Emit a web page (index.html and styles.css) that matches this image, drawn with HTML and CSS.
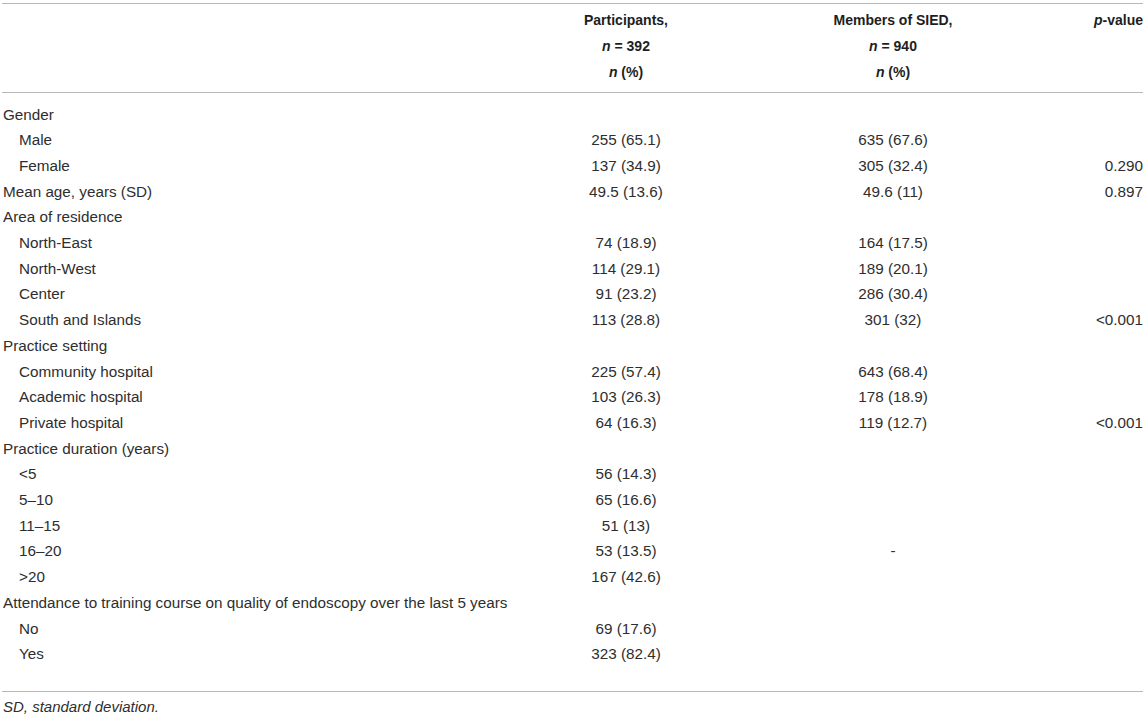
FILE: index.html
```html
<!DOCTYPE html>
<html lang="en">
<head>
<meta charset="utf-8">
<title>Table</title>
<link rel="stylesheet" href="styles.css">
</head>
<body>
<div class="wrap">
<table class="data">
  <colgroup>
    <col class="c1"><col class="c2"><col class="c3"><col class="c4">
  </colgroup>
  <thead>
    <tr class="h1">
      <th></th>
      <th class="ctr">Participants,<br><i>n</i> = 392</th>
      <th class="ctr">Members of SIED,<br><i>n</i> = 940</th>
      <th class="rt"><i>p</i>-value</th>
    </tr>
    <tr class="h2">
      <th></th>
      <th class="ctr"><i>n</i> (%)</th>
      <th class="ctr"><i>n</i> (%)</th>
      <th></th>
    </tr>
  </thead>
  <tbody>
    <tr class="first"><td>Gender</td><td></td><td></td><td></td></tr>
    <tr><td class="ind">Male</td><td class="ctr">255 (65.1)</td><td class="ctr">635 (67.6)</td><td></td></tr>
    <tr><td class="ind">Female</td><td class="ctr">137 (34.9)</td><td class="ctr">305 (32.4)</td><td class="rt">0.290</td></tr>
    <tr><td>Mean age, years (SD)</td><td class="ctr">49.5 (13.6)</td><td class="ctr">49.6 (11)</td><td class="rt">0.897</td></tr>
    <tr><td>Area of residence</td><td></td><td></td><td></td></tr>
    <tr><td class="ind">North-East</td><td class="ctr">74 (18.9)</td><td class="ctr">164 (17.5)</td><td></td></tr>
    <tr><td class="ind">North-West</td><td class="ctr">114 (29.1)</td><td class="ctr">189 (20.1)</td><td></td></tr>
    <tr><td class="ind">Center</td><td class="ctr">91 (23.2)</td><td class="ctr">286 (30.4)</td><td></td></tr>
    <tr><td class="ind">South and Islands</td><td class="ctr">113 (28.8)</td><td class="ctr">301 (32)</td><td class="rt">&lt;0.001</td></tr>
    <tr><td>Practice setting</td><td></td><td></td><td></td></tr>
    <tr><td class="ind">Community hospital</td><td class="ctr">225 (57.4)</td><td class="ctr">643 (68.4)</td><td></td></tr>
    <tr><td class="ind">Academic hospital</td><td class="ctr">103 (26.3)</td><td class="ctr">178 (18.9)</td><td></td></tr>
    <tr><td class="ind">Private hospital</td><td class="ctr">64 (16.3)</td><td class="ctr">119 (12.7)</td><td class="rt">&lt;0.001</td></tr>
    <tr><td>Practice duration (years)</td><td></td><td></td><td></td></tr>
    <tr><td class="ind">&lt;5</td><td class="ctr">56 (14.3)</td><td class="ctr"></td><td></td></tr>
    <tr><td class="ind">5–10</td><td class="ctr">65 (16.6)</td><td class="ctr"></td><td></td></tr>
    <tr><td class="ind">11–15</td><td class="ctr">51 (13)</td><td class="ctr"></td><td></td></tr>
    <tr><td class="ind">16–20</td><td class="ctr">53 (13.5)</td><td class="ctr">-</td><td></td></tr>
    <tr><td class="ind">&gt;20</td><td class="ctr">167 (42.6)</td><td class="ctr"></td><td></td></tr>
    <tr><td>Attendance to training course on quality of endoscopy over the last 5 years</td><td></td><td></td><td></td></tr>
    <tr><td class="ind">No</td><td class="ctr">69 (17.6)</td><td class="ctr"></td><td></td></tr>
    <tr class="last"><td class="ind">Yes</td><td class="ctr">323 (82.4)</td><td class="ctr"></td><td></td></tr>
  </tbody>
</table>
<p class="note">SD, standard deviation.</p>
</div>
</body>
</html>
```
FILE: styles.css
```css
html, body {
  margin: 0;
  padding: 0;
  background: #fff;
}
body {
  font-family: "Liberation Sans", Arial, Helvetica, sans-serif;
  font-size: 15.25px;
  color: #2e2e2e;
}
.wrap {
  padding: 3px 0 0 2px;
}
.data {
  width: 1141px;
  border-collapse: collapse;
  table-layout: fixed;
}
.c1 { width: 493px; }
.c2 { width: 262px; }
.c3 { width: 272px; }
.c4 { width: 114px; }
.data thead {
  border-top: 1px solid #b8b8b8;
  border-bottom: 1px solid #b8b8b8;
}
.data tbody {
  border-bottom: 1px solid #b8b8b8;
}
.data th {
  font-size: 14px;
  font-weight: bold;
  vertical-align: top;
  line-height: 26px;
  padding: 0 1px;
  color: #1e1e1e;
}
.data .h1 th { padding-top: 3px; }
.data .h2 th { padding-bottom: 7px; }
.data td {
  padding: 4px 1px;
  line-height: 17.7px;
  white-space: nowrap;
}
.data tr.first td { padding-top: 12.5px; }
.data tr.last td { padding-bottom: 28px; }
.ctr { text-align: center; }
.rt { text-align: right; }
.data th.rt, .data td.rt { padding-right: 0; }
.ind { padding-left: 17px !important; }
.note {
  margin: 0;
  padding: 6px 1px;
  font-style: italic;
  font-size: 15px;
}
```
